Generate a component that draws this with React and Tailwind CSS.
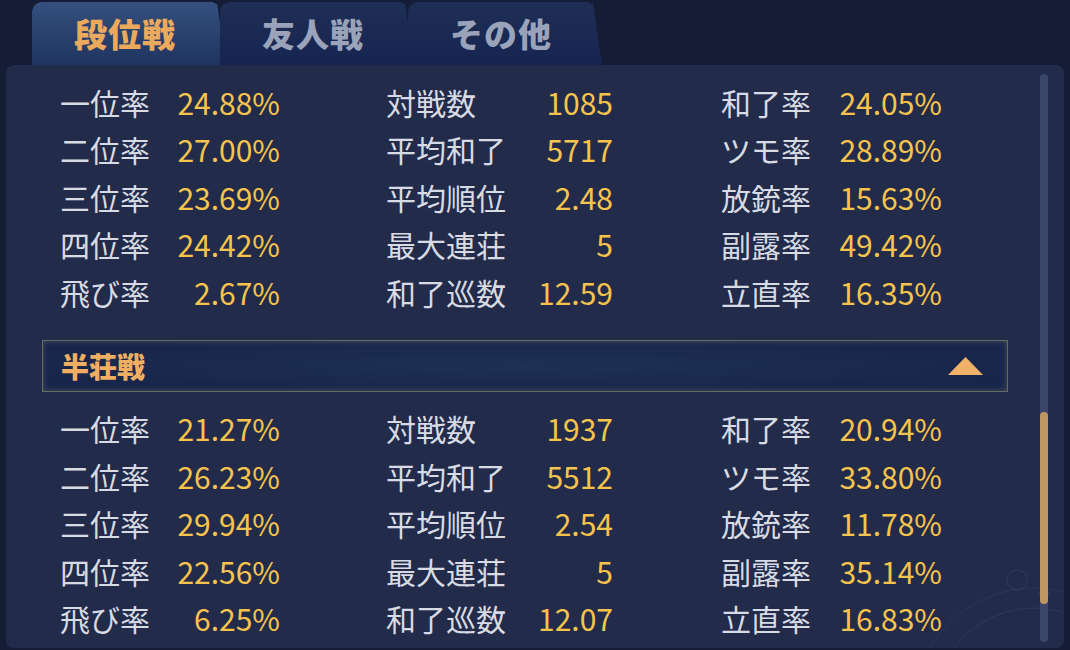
import React from 'react';

const ranked = [
  [
    ['一位率', '24.88%'], ['対戦数', '1085'], ['和了率', '24.05%'],
    ['二位率', '27.00%'], ['平均和了', '5717'], ['ツモ率', '28.89%'],
    ['三位率', '23.69%'], ['平均順位', '2.48'], ['放銃率', '15.63%'],
    ['四位率', '24.42%'], ['最大連荘', '5'], ['副露率', '49.42%'],
    ['飛び率', '2.67%'], ['和了巡数', '12.59'], ['立直率', '16.35%'],
  ],
  [
    ['一位率', '21.27%'], ['対戦数', '1937'], ['和了率', '20.94%'],
    ['二位率', '26.23%'], ['平均和了', '5512'], ['ツモ率', '33.80%'],
    ['三位率', '29.94%'], ['平均順位', '2.54'], ['放銃率', '11.78%'],
    ['四位率', '22.56%'], ['最大連荘', '5'], ['副露率', '35.14%'],
    ['飛び率', '6.25%'], ['和了巡数', '12.07'], ['立直率', '16.83%'],
  ],
];

const colWidths = ['w-[220px]', 'w-[227px] ml-[106px]', 'w-[221px] ml-[108px]'];

const StatGrid = ({ stats }) => {
  const rows = [];
  for (let i = 0; i < stats.length; i += 3) rows.push(stats.slice(i, i + 3));
  return (
    <div className="pl-[54px]">
      {rows.map((row, r) => (
        <div key={r} className="flex h-[47.5px] items-center">
          {row.map(([label, value], c) => (
            <div key={c} className={`flex items-center justify-between ${colWidths[c]}`}>
              <span className="text-[#d8dbe3]">{label}</span>
              <span className="text-[#f6c44d]">{value}</span>
            </div>
          ))}
        </div>
      ))}
    </div>
  );
};

const Tab = ({ label, active, className }) => (
  <div
    className={`relative flex h-[63px] w-[194px] items-center justify-center rounded-tl-[10px] [clip-path:polygon(0_0,93%_0,95.5%_4%,100%_100%,0_100%)] ${
      active
        ? 'bg-gradient-to-b from-[#34507f] to-[#1f3460]'
        : 'bg-gradient-to-b from-[#1f2e55] to-[#162550]'
    } ${className || ''}`}
  >
    <span
      className={`pr-[8px] text-[33px] font-black tracking-[1px] ${
        active ? 'text-[#eba95c]' : 'text-[#9aa3ba]'
      }`}
    >
      {label}
    </span>
  </div>
);

export default function App() {
  return (
    <div
      className="relative h-[650px] w-[1070px] overflow-hidden bg-[#151c35]"
      style={{ fontFamily: '"Noto Sans CJK JP", "Noto Sans", sans-serif' }}
    >
      {/* tabs */}
      <div className="flex pl-[32px] pt-[2px]">
        <Tab label="段位戦" active />
        <Tab label="友人戦" className="-ml-[6px]" />
        <Tab label="その他" className="-ml-[6px]" />
      </div>

      {/* panel */}
      <div className="relative mx-[6px] h-[583px] overflow-hidden rounded-[8px] bg-[#222b4a] text-[30px] leading-none">
        <div className="pt-[13px]">
          <StatGrid stats={ranked[0]} />
        </div>

        <div className="ml-[36px] mt-[24px] flex h-[52px] w-[966px] items-center justify-between border-[1.5px] border-[#646c62] bg-[radial-gradient(ellipse_at_center,#1d3155_0%,#19264c_70%,#18244a_100%)] pl-[18px] pr-[24px] shadow-[inset_0_0_6px_rgba(140,150,120,0.4)]">
          <span className="text-[28px] font-black text-[#efae62]">半荘戦</span>
          <svg width="35" height="18" viewBox="0 0 35 18">
            <polygon points="17.5,0 35,18 0,18" fill="#f2b168" />
          </svg>
        </div>

        <div className="mt-[13px]">
          <StatGrid stats={ranked[1]} />
        </div>

        {/* decorative arcs */}
        <svg className="pointer-events-none absolute bottom-0 right-0" width="160" height="90" viewBox="0 0 160 90">
          <circle cx="130" cy="150" r="100" fill="none" stroke="#3a4770" strokeWidth="1" opacity="0.5" />
          <circle cx="130" cy="150" r="120" fill="none" stroke="#3a4770" strokeWidth="1" opacity="0.4" />
          <circle cx="113" cy="22" r="10" fill="none" stroke="#3a4770" strokeWidth="1" opacity="0.5" />
          <circle cx="140" cy="36" r="5" fill="none" stroke="#3a4770" strokeWidth="1" opacity="0.5" />
        </svg>

        {/* scrollbar */}
        <div className="absolute right-[16px] top-[9px] h-[568px] w-[8px] rounded-full bg-[#3b4769]">
          <div className="absolute left-0 top-[338px] h-[192px] w-[8px] rounded-full bg-[#c09760]" />
        </div>
      </div>
    </div>
  );
}
